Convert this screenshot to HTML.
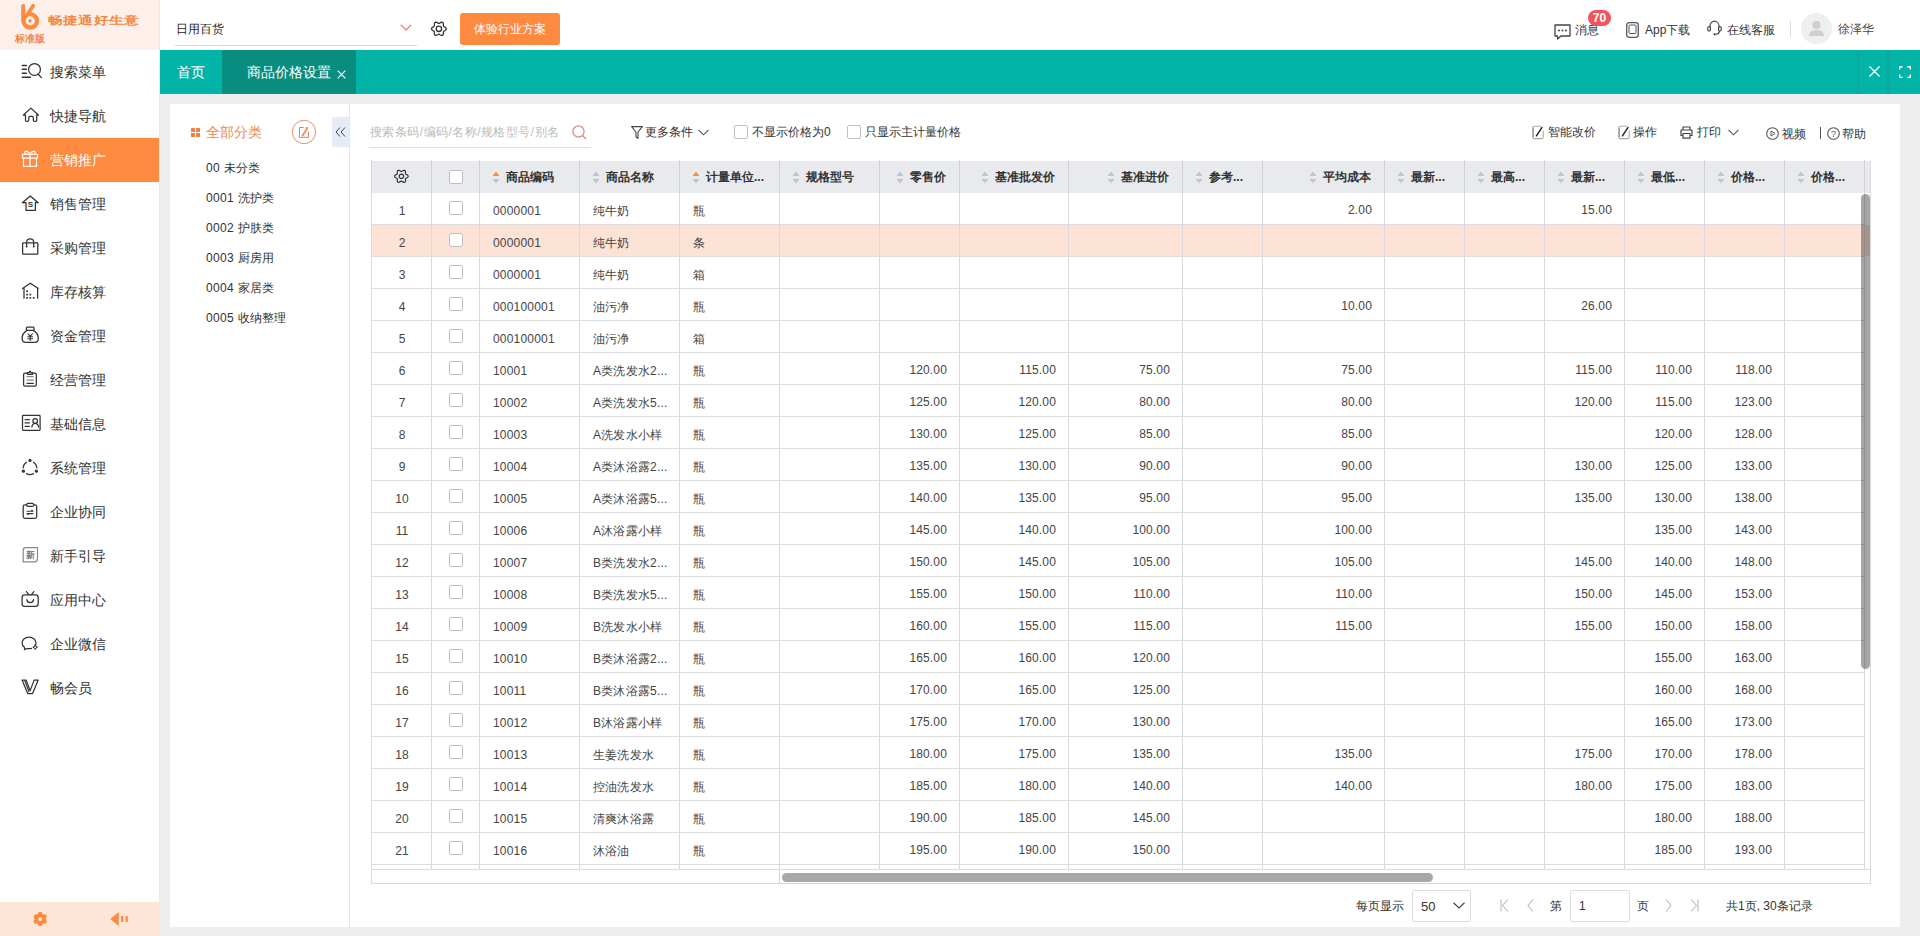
<!DOCTYPE html><html><head><meta charset="utf-8"><style>
*{box-sizing:border-box;margin:0;padding:0}
body{width:1920px;height:936px;overflow:hidden;position:relative;background:#eeeeee;font-family:"Liberation Sans",sans-serif;color:#333;font-size:12px}
.abs{position:absolute}
#sb{position:absolute;left:0;top:0;width:160px;height:936px;background:#fff;border-right:1px solid #e6e9ee}
#logo{position:absolute;left:0;top:0;width:159px;height:50px;background:#fdf0ea}
.mi{position:absolute;left:0;width:159px;height:44px;font-size:14px;color:#333;white-space:nowrap}
.mi .ic{position:absolute;left:18px;top:8px;width:28px;height:28px}
.mi .tx{position:absolute;left:50px;top:0;line-height:44px}
.mi.on{background:#fd8a3f;color:#fff}
#sbb{position:absolute;left:0;top:902px;width:159px;height:34px;background:#fde6d8}
#hd{position:absolute;left:160px;top:0;width:1760px;height:50px;background:#fff}
#tabs{position:absolute;left:160px;top:50px;width:1760px;height:44px;background:#02b4a8;color:#fff;font-size:14px}
#panel{position:absolute;left:170px;top:104px;width:1730px;height:823px;background:#fff}
.t{position:absolute;white-space:nowrap}
</style></head><body>

<div id="sb">
<div id="logo">
<svg class="abs" style="left:14px;top:0px" width="32" height="34" viewBox="14 0 32 34">
<path d="M23.2 5.9V21" fill="none" stroke="#fd8a3f" stroke-width="4" stroke-linecap="round"/>
<path d="M33 5.9L28.2 13.5" fill="none" stroke="#fd8a3f" stroke-width="3.8" stroke-linecap="round"/>
<circle cx="30.3" cy="20.9" r="6.7" fill="none" stroke="#fd8a3f" stroke-width="4.3"/>
<path d="M30 18.7L32.2 20.9L30 23.1L27.8 20.9Z" fill="#fd8a3f"/>
</svg>
<div class="t" style="left:48px;top:10px;font-size:15px;line-height:20px;color:#f5883f;font-weight:bold;transform:scaleY(0.75);transform-origin:0 50%;letter-spacing:0.2px">畅捷通好生意</div>
<div class="t" style="left:15px;top:32px;font-size:10px;line-height:13px;color:#f08545;font-weight:bold">标准版</div>
</div>
<div class="mi" style="top:50px"><span class="ic"><svg width="28" height="28" viewBox="0 0 28 28"><g stroke="#333" fill="none" stroke-width="1.25" stroke-linecap="round" stroke-linejoin="round"><path d="M4.3 7.5H8.4M4.3 11.3H8.4M4.3 15.3H8.4M4.3 19.3H12.5" stroke-width="1.4"/><circle cx="16.5" cy="11.4" r="5.9"/><path d="M20.2 16.2L23.4 19.6"/></g></svg></span><span class="tx">搜索菜单</span></div>
<div class="mi" style="top:94px"><span class="ic"><svg width="28" height="28" viewBox="0 0 28 28"><g stroke="#333" fill="none" stroke-width="1.25" stroke-linecap="round" stroke-linejoin="round"><path d="M5.4 13L12.9 6.1L20.4 13H18.7V18.2Q18.7 19.4 17.5 19.4H16.5Q15.3 19.4 15.3 18.2V15.6Q15.3 14.4 14.1 14.4H12Q10.8 14.4 10.8 15.6V18.2Q10.8 19.4 9.6 19.4H8.7Q7.5 19.4 7.5 18.2V13Z"/></g></svg></span><span class="tx">快捷导航</span></div>
<div class="mi on" style="top:138px"><span class="ic"><svg width="28" height="28" viewBox="0 0 28 28"><g stroke="#fff" fill="none" stroke-width="1.25" stroke-linecap="round" stroke-linejoin="round"><rect x="4.5" y="8.4" width="15" height="3.6"/><path d="M5.5 12V20.4H18.5V12M12 8.4V20.4"/><path d="M12 8.2C10.5 6 8.5 4.8 7.3 5.6C6.3 6.3 6.8 7.6 7.8 8.2M12 8.2C13.5 6 15.5 4.8 16.7 5.6C17.7 6.3 17.2 7.6 16.2 8.2"/></g></svg></span><span class="tx">营销推广</span></div>
<div class="mi" style="top:182px"><span class="ic"><svg width="28" height="28" viewBox="0 0 28 28"><g stroke="#333" fill="none" stroke-width="1.25" stroke-linecap="round" stroke-linejoin="round"><path d="M4.3 12.7L12.3 6L20.2 12.7H17.4V20.4H8V12.7Z"/></g><text x="12.3" y="16.6" font-size="8" font-weight="bold" text-anchor="middle" fill="#333" font-family="Liberation Sans">S</text></svg></span><span class="tx">销售管理</span></div>
<div class="mi" style="top:226px"><span class="ic"><svg width="28" height="28" viewBox="0 0 28 28"><g stroke="#333" fill="none" stroke-width="1.25" stroke-linecap="round" stroke-linejoin="round"><rect x="4.6" y="8.8" width="15.2" height="11.4" rx="0.6"/><path d="M8.6 12.5V8.5C8.6 6.3 10 4.8 12.15 4.8C14.3 4.8 15.7 6.3 15.7 8.5V12.5"/></g><g fill="#333"><circle cx="8.6" cy="12.6" r="0.9"/><circle cx="15.7" cy="12.6" r="0.9"/></g></svg></span><span class="tx">采购管理</span></div>
<div class="mi" style="top:270px"><span class="ic"><svg width="28" height="28" viewBox="0 0 28 28"><g stroke="#333" fill="none" stroke-width="1.25" stroke-linecap="round" stroke-linejoin="round"><path d="M4.5 10.5L12.35 5.2L20.2 10.5M6 9.8V20.2M19.6 9.8V20.2"/></g><g fill="#333"><rect x="8.2" y="12.3" width="1.7" height="1.7"/><rect x="8.2" y="15.7" width="1.7" height="1.7"/><rect x="11.5" y="15.7" width="1.7" height="1.7"/><rect x="8.2" y="19" width="1.7" height="1.7"/><rect x="11.5" y="19" width="1.7" height="1.7"/><rect x="14.8" y="19" width="1.7" height="1.7"/></g></svg></span><span class="tx">库存核算</span></div>
<div class="mi" style="top:314px"><span class="ic"><svg width="28" height="28" viewBox="0 0 28 28"><g stroke="#333" fill="none" stroke-width="1.25" stroke-linecap="round" stroke-linejoin="round"><path d="M9.2 8.4H15.2Q16.2 8.4 16.1 7.4L15.9 5.8Q15.8 5 15 5H9.4Q8.6 5 8.5 5.8L8.3 7.4Q8.2 8.4 9.2 8.4Z"/><path d="M9.2 8.4C5.5 10.5 4 13.5 4.1 16.5C4.2 19.2 5.5 20.4 8 20.4H16.5C19 20.4 20.2 19.2 20.3 16.5C20.4 13.5 18.9 10.5 15.2 8.4"/><path d="M10 11.8L12.2 14.2L14.4 11.8M12.2 14.2V18.5M9.8 14.8H14.6M9.8 16.8H14.6" stroke-width="1.1"/></g></svg></span><span class="tx">资金管理</span></div>
<div class="mi" style="top:358px"><span class="ic"><svg width="28" height="28" viewBox="0 0 28 28"><g stroke="#333" fill="none" stroke-width="1.25" stroke-linecap="round" stroke-linejoin="round"><path d="M9.5 7.1H7Q5.6 7.1 5.6 8.5V18.8Q5.6 20.2 7 20.2H16.9Q18.3 20.2 18.3 18.8V8.5Q18.3 7.1 16.9 7.1H14.5"/><path d="M9.5 8.3V6.6H11.2Q11.4 5.2 12 5.2Q12.6 5.2 12.8 6.6H14.5V8.3Z"/><path d="M9 10.6H15.3M9 14H15.3" stroke="#888"/><path d="M9 17.4H15.3"/></g></svg></span><span class="tx">经营管理</span></div>
<div class="mi" style="top:402px"><span class="ic"><svg width="28" height="28" viewBox="0 0 28 28"><g stroke="#333" fill="none" stroke-width="1.25" stroke-linecap="round" stroke-linejoin="round"><rect x="4.5" y="5.4" width="17.6" height="15" rx="0.8"/><path d="M7.1 9.5H11.4M7.1 12.9H11.4M7.1 16.3H11.4"/><circle cx="17.2" cy="11" r="2.3"/><path d="M13.8 17C14.3 14.6 15.5 13.4 17.2 13.4C18.9 13.4 20.1 14.6 20.6 17"/></g></svg></span><span class="tx">基础信息</span></div>
<div class="mi" style="top:446px"><span class="ic"><svg width="28" height="28" viewBox="0 0 28 28"><g stroke="#333" fill="none" stroke-width="1.25" stroke-linecap="round" stroke-linejoin="round"><path d="M8.6 8.2A6.9 6.9 0 0 0 5.2 13.8M15.4 8.2A6.9 6.9 0 0 1 18.8 13.8M8.5 19.6A6.9 6.9 0 0 0 15.5 19.6"/></g><g fill="#333"><circle cx="12" cy="6.4" r="1.6"/><circle cx="5.4" cy="17.2" r="1.6"/><circle cx="18.4" cy="17.2" r="1.6"/></g></svg></span><span class="tx">系统管理</span></div>
<div class="mi" style="top:490px"><span class="ic"><svg width="28" height="28" viewBox="0 0 28 28"><g stroke="#333" fill="none" stroke-width="1.25" stroke-linecap="round" stroke-linejoin="round"><path d="M8.6 6.8H7Q5.2 6.8 5.2 8.6V18.6Q5.2 20.4 7 20.4H16.9Q18.7 20.4 18.7 18.6V8.6Q18.7 6.8 16.9 6.8H15.7"/><rect x="8.6" y="5.4" width="7.1" height="3.0" rx="1.5"/><path d="M9 13.3H15L13.8 12.2M15 15.6H9L10.2 16.7" stroke-width="1.1"/></g></svg></span><span class="tx">企业协同</span></div>
<div class="mi" style="top:534px"><span class="ic"><svg width="28" height="28" viewBox="0 0 28 28"><g stroke="#888" fill="none" stroke-width="1.2" stroke-linejoin="round"><path d="M7.7 5.6H19.5V16.8Q19.5 19.8 16.5 19.8H5.2V8.1Q5.2 5.6 7.7 5.6Z"/></g><text x="12.3" y="15.8" font-size="8.5" font-weight="bold" text-anchor="middle" fill="#777">新</text></svg></span><span class="tx">新手引导</span></div>
<div class="mi" style="top:578px"><span class="ic"><svg width="28" height="28" viewBox="0 0 28 28"><g stroke="#333" fill="none" stroke-width="1.25" stroke-linecap="round" stroke-linejoin="round"><rect x="4.1" y="8.8" width="16.1" height="11.6" rx="2.6"/><path d="M8.4 5.6L10.8 8.6M15.9 5.6L13.5 8.6M8.8 13.6Q9.2 16.6 12.15 16.6Q15.1 16.6 15.5 13.6"/></g></svg></span><span class="tx">应用中心</span></div>
<div class="mi" style="top:622px"><span class="ic"><svg width="28" height="28" viewBox="0 0 28 28"><g stroke="#333" fill="none" stroke-width="1.25" stroke-linecap="round" stroke-linejoin="round"><path d="M17.6 15.4C18 14.6 18.1 13.8 18 12.9C17.8 9.6 14.9 7.1 11.1 7.1C7.2 7.1 4.1 9.6 4.1 12.9C4.1 14.7 5 16.2 6.4 17.3L6.6 19.6L9 18.5C9.7 18.7 10.4 18.7 11.1 18.7C12 18.7 12.8 18.6 13.6 18.3"/><path d="M17.2 14.8L17.9 16.5L19.6 17.2L17.9 17.9L17.2 19.6L16.5 17.9L14.8 17.2L16.5 16.5Z" stroke-width="1"/></g></svg></span><span class="tx">企业微信</span></div>
<div class="mi" style="top:666px"><span class="ic"><svg width="28" height="28" viewBox="0 0 28 28"><g stroke="#333" fill="none" stroke-width="1.25" stroke-linecap="round" stroke-linejoin="round" stroke-width="1.2"><path d="M4.1 6.1H8.2L12.15 16.6L16.1 6.1H20.2L14.6 19.6H9.7Z"/><path d="M6.8 6.6L11 17.5"/></g></svg></span><span class="tx">畅会员</span></div>
<div id="sbb">
<svg class="abs" style="left:33px;top:10px" width="15" height="14" viewBox="0 0 15 14"><g fill="#fd8a3f"><circle cx="7.2" cy="7" r="4.9"/><circle cx="7.20" cy="11.60" r="2.5"/><circle cx="3.22" cy="9.30" r="2.5"/><circle cx="3.22" cy="4.70" r="2.5"/><circle cx="7.20" cy="2.40" r="2.5"/><circle cx="11.18" cy="4.70" r="2.5"/><circle cx="11.18" cy="9.30" r="2.5"/></g><circle cx="7.2" cy="7" r="2" fill="#fde6d8"/></svg>
<svg class="abs" style="left:110px;top:10px" width="19" height="14" viewBox="0 0 19 14"><path fill="#fd8a3f" d="M0.3 7L8.7 0V14Z"/><rect x="11" y="4" width="2.2" height="6" fill="#fd8a3f"/><rect x="15.6" y="4" width="2.2" height="6" fill="#fd8a3f"/></svg>
</div>
</div>
<div id="hd">
<div class="t" style="left:16px;top:20px;font-size:12px;line-height:18px;color:#222">日用百货</div>
<svg class="abs" style="left:240px;top:24px" width="12" height="7" viewBox="0 0 12 7"><path d="M0.8 0.8L6 6L11.2 0.8" fill="none" stroke="#e2887a" stroke-width="1.3"/></svg>
<div class="abs" style="left:15px;top:45px;width:242px;height:1px;background:#d9d9d9"></div>
<svg class="abs" style="left:269px;top:19px" width="20" height="20" viewBox="0 0 20 20"><path fill="none" stroke="#333" stroke-width="1.3" stroke-linejoin="round" d="M17.30 9.80 L17.21 10.28 L16.95 10.73 L16.55 11.12 L16.08 11.46 L15.60 11.73 L15.16 11.98 L14.81 12.22 L14.58 12.50 L14.45 12.84 L14.42 13.27 L14.42 13.77 L14.43 14.33 L14.37 14.90 L14.23 15.44 L13.97 15.89 L13.60 16.21 L13.14 16.37 L12.62 16.37 L12.08 16.22 L11.56 15.98 L11.07 15.70 L10.64 15.44 L10.26 15.26 L9.90 15.20 L9.54 15.26 L9.16 15.44 L8.73 15.70 L8.24 15.98 L7.72 16.22 L7.18 16.37 L6.66 16.37 L6.20 16.21 L5.83 15.89 L5.57 15.44 L5.43 14.90 L5.37 14.33 L5.38 13.77 L5.38 13.27 L5.35 12.84 L5.22 12.50 L4.99 12.22 L4.64 11.98 L4.20 11.73 L3.72 11.46 L3.25 11.12 L2.85 10.73 L2.59 10.28 L2.50 9.80 L2.59 9.32 L2.85 8.87 L3.25 8.48 L3.72 8.14 L4.20 7.87 L4.64 7.62 L4.99 7.38 L5.22 7.10 L5.35 6.76 L5.38 6.33 L5.38 5.83 L5.37 5.27 L5.43 4.70 L5.57 4.16 L5.83 3.71 L6.20 3.39 L6.66 3.23 L7.18 3.23 L7.72 3.38 L8.24 3.62 L8.73 3.90 L9.16 4.16 L9.54 4.34 L9.90 4.40 L10.26 4.34 L10.64 4.16 L11.07 3.90 L11.56 3.62 L12.08 3.38 L12.62 3.23 L13.14 3.23 L13.60 3.39 L13.97 3.71 L14.23 4.16 L14.37 4.70 L14.43 5.27 L14.42 5.83 L14.42 6.33 L14.45 6.76 L14.58 7.10 L14.81 7.38 L15.16 7.62 L15.60 7.87 L16.08 8.14 L16.55 8.48 L16.95 8.87 L17.21 9.32Z"/><circle cx="9.9" cy="9.8" r="2.7" fill="none" stroke="#333" stroke-width="1.3"/></svg>
<div class="abs" style="left:300px;top:13px;width:100px;height:32px;background:#fd8a3f;border-radius:3px;color:#fff;font-size:12px;line-height:33px;text-align:center">体验行业方案</div>
<svg class="abs" style="left:1394px;top:24px" width="17" height="16" viewBox="0 0 17 16"><path fill="none" stroke="#444" stroke-width="1.3" stroke-linejoin="round" d="M1 1H16V12H7L3.5 15V12H1Z"/><g fill="#444"><circle cx="5" cy="6.5" r="1"/><circle cx="8.5" cy="6.5" r="1"/><circle cx="12" cy="6.5" r="1"/></g></svg>
<div class="t" style="left:1415px;top:21px;font-size:12px;line-height:18px;color:#333">消息</div>
<div class="abs" style="left:1428px;top:10px;width:23px;height:16px;border-radius:8px;background:#f2545b;color:#fff;font-size:12px;font-weight:bold;line-height:16px;text-align:center">70</div>
<svg class="abs" style="left:1466px;top:22px" width="13" height="16" viewBox="0 0 13 16"><rect x="0.7" y="0.7" width="11.6" height="14.6" rx="2.5" fill="none" stroke="#555" stroke-width="1.3"/><rect x="3" y="3" width="7" height="8.5" rx="1" fill="none" stroke="#555" stroke-width="1"/></svg>
<div class="t" style="left:1485px;top:21px;font-size:12px;line-height:18px;color:#333">App下载</div>
<svg class="abs" style="left:1547px;top:20px" width="15" height="16" viewBox="0 0 15 16"><path fill="none" stroke="#444" stroke-width="1.2" d="M3 7.5V6C3 3.2 5 1.2 7.5 1.2C10 1.2 12 3.2 12 6V7.5"/><rect x="0.8" y="6.5" width="2.6" height="4.5" rx="1.3" fill="none" stroke="#444" stroke-width="1.2"/><rect x="11.6" y="6.5" width="2.6" height="4.5" rx="1.3" fill="none" stroke="#444" stroke-width="1.2"/><path d="M12.5 11C12.5 13 11 14 8.5 14.3" fill="none" stroke="#444" stroke-width="1.2"/><circle cx="7.5" cy="14.3" r="1.1" fill="#444"/></svg>
<div class="t" style="left:1567px;top:21px;font-size:12px;line-height:18px;color:#333">在线客服</div>
<div class="abs" style="left:1630px;top:21px;width:1px;height:16px;background:#ddd"></div>
<div class="abs" style="left:1641px;top:13px;width:31px;height:31px;border-radius:50%;background:#efefef;overflow:hidden"><svg width="31" height="31" viewBox="0 0 31 31"><circle cx="15.5" cy="12" r="4" fill="#cfcfcf"/><path d="M8 23C8 19 11 17 15.5 17C20 17 23 19 23 23Z" fill="#cfcfcf"/></svg></div>
<div class="t" style="left:1678px;top:20px;font-size:12px;line-height:18px;color:#444">徐泽华</div>
</div>
<div id="tabs">
<div class="t" style="left:17px;top:0;line-height:44px">首页</div>
<div class="abs" style="left:62px;top:0;width:134px;height:44px;background:#088d80"></div>
<div class="t" style="left:87px;top:0;line-height:44px">商品价格设置</div>
<svg class="abs" style="left:177px;top:20px" width="9" height="9" viewBox="0 0 9 9"><path d="M0.7 0.7L8.3 8.3M8.3 0.7L0.7 8.3" stroke="#fff" stroke-width="1.2"/></svg>
<div class="abs" style="left:1697px;top:0;width:2px;height:44px;background:#0aa99c"></div>
<div class="abs" style="left:1727px;top:0;width:2px;height:44px;background:#0aa99c"></div>
<svg class="abs" style="left:1709px;top:16px" width="11" height="11" viewBox="0 0 11 11"><path d="M0.5 0.5L10.5 10.5M10.5 0.5L0.5 10.5" stroke="#fff" stroke-width="1.3"/></svg>
<svg class="abs" style="left:1739px;top:16px" width="12" height="12" viewBox="0 0 12 12"><path d="M0.7 3.6V0.7H3.6M8.4 0.7H11.3V3.6M11.3 8.4V11.3H8.4M3.6 11.3H0.7V8.4" fill="none" stroke="#fff" stroke-width="1.35"/></svg>
</div>
<div id="panel"></div>
<div class="abs" style="left:349px;top:104px;width:1px;height:823px;background:#e5e5e5"></div>
<svg class="abs" style="left:191px;top:128px" width="9" height="9" viewBox="0 0 9 9"><g fill="#ec8348"><rect x="0" y="0" width="4" height="4"/><rect x="5" y="0" width="4" height="4"/><rect x="0" y="5" width="4" height="4"/><rect x="5" y="5" width="4" height="4"/></g></svg>
<div class="t" style="left:206px;top:123px;font-size:14px;line-height:18px;color:#f0884e">全部分类</div>
<svg class="abs" style="left:291px;top:119px" width="26" height="26" viewBox="0 0 26 26"><circle cx="13" cy="13" r="11.7" fill="none" stroke="#e69070" stroke-width="1"/><path d="M12.6 8.5H8.5V18.3H17.5V12.5" fill="none" stroke="#d9825f" stroke-width="1"/><path d="M14.8 8.5H16.5" stroke="#d9825f" stroke-width="1"/><path d="M16.2 9.6L11.6 16.6" stroke="#f08c50" stroke-width="1.8" stroke-linecap="round"/></svg>
<div class="abs" style="left:332px;top:117px;width:17px;height:30px;background:#e6ecf6"></div>
<svg class="abs" style="left:335px;top:127px" width="11" height="10" viewBox="0 0 11 10"><path d="M5 0.5L1 5L5 9.5M10 0.5L6 5L10 9.5" fill="none" stroke="#444" stroke-width="1"/></svg>
<div class="t" style="left:206px;top:159px;font-size:12px;line-height:18px;color:#333;letter-spacing:0.3px">00 未分类</div>
<div class="t" style="left:206px;top:189px;font-size:12px;line-height:18px;color:#333;letter-spacing:0.3px">0001 洗护类</div>
<div class="t" style="left:206px;top:219px;font-size:12px;line-height:18px;color:#333;letter-spacing:0.3px">0002 护肤类</div>
<div class="t" style="left:206px;top:249px;font-size:12px;line-height:18px;color:#333;letter-spacing:0.3px">0003 厨房用</div>
<div class="t" style="left:206px;top:279px;font-size:12px;line-height:18px;color:#333;letter-spacing:0.3px">0004 家居类</div>
<div class="t" style="left:206px;top:309px;font-size:12px;line-height:18px;color:#333;letter-spacing:0.3px">0005 收纳整理</div>
<div class="t" style="left:370px;top:123px;font-size:12px;line-height:18px;color:#bbb;letter-spacing:0.45px">搜索条码/编码/名称/规格型号/别名</div>
<svg class="abs" style="left:572px;top:125px" width="15" height="15" viewBox="0 0 15 15"><circle cx="6.5" cy="6.5" r="5.6" fill="none" stroke="#d98a7c" stroke-width="1.2"/><path d="M10.5 10.5L14 14" stroke="#d98a7c" stroke-width="1.2"/></svg>
<div class="abs" style="left:369px;top:147px;width:222px;height:1px;background:#e0e0e0"></div>
<svg class="abs" style="left:631px;top:126px" width="12" height="13" viewBox="0 0 12 13"><path d="M0.6 0.6H11.4L7 6V12.4L5 11V6Z" fill="none" stroke="#444" stroke-width="1.1" stroke-linejoin="round"/></svg>
<div class="t" style="left:645px;top:123px;font-size:12px;line-height:18px;color:#333">更多条件</div>
<svg class="abs" style="left:698px;top:129px" width="11" height="7" viewBox="0 0 11 7"><path d="M0.5 0.8L5.5 5.8L10.5 0.8" fill="none" stroke="#555" stroke-width="1.1"/></svg>
<div class="abs" style="left:734px;top:125px;width:14px;height:14px;border:1px solid #bfbfbf;border-radius:2px;background:#fff"></div>
<div class="t" style="left:752px;top:123px;font-size:12px;line-height:18px;color:#333">不显示价格为0</div>
<div class="abs" style="left:847px;top:125px;width:14px;height:14px;border:1px solid #bfbfbf;border-radius:2px;background:#fff"></div>
<div class="t" style="left:865px;top:123px;font-size:12px;line-height:18px;color:#333">只显示主计量价格</div>
<svg class="abs" style="left:1532px;top:125px" width="13" height="15" viewBox="0 0 13 15"><path d="M9.5 1.3H2.3Q0.9 1.3 0.9 2.7V12.2Q0.9 13.6 2.3 13.6H9.8Q11.2 13.6 11.2 12.2V5.5" fill="none" stroke="#aaa" stroke-width="1.1"/><path d="M1.2 2.5V12.5" stroke="#999" stroke-width="1.3"/><path d="M4.4 10.8L9.9 2.6" stroke="#222" stroke-width="1.5" stroke-linecap="round"/></svg>
<div class="t" style="left:1548px;top:123px;font-size:12px;line-height:18px;color:#333">智能改价</div>
<svg class="abs" style="left:1618px;top:125px" width="13" height="15" viewBox="0 0 13 15"><path d="M9.5 1.3H2.3Q0.9 1.3 0.9 2.7V12.2Q0.9 13.6 2.3 13.6H9.8Q11.2 13.6 11.2 12.2V5.5" fill="none" stroke="#aaa" stroke-width="1.1"/><path d="M1.2 2.5V12.5" stroke="#999" stroke-width="1.3"/><path d="M4.4 10.8L9.9 2.6" stroke="#222" stroke-width="1.5" stroke-linecap="round"/></svg>
<div class="t" style="left:1633px;top:123px;font-size:12px;line-height:18px;color:#333">操作</div>
<svg class="abs" style="left:1680px;top:126px" width="13" height="13" viewBox="0 0 13 13"><path d="M3 4V1H10V4M3 9.5H1V4H12V9.5H10M3 7.5H10V12.2H3Z" fill="none" stroke="#444" stroke-width="1.2" stroke-linejoin="round"/></svg>
<div class="t" style="left:1697px;top:123px;font-size:12px;line-height:18px;color:#333">打印</div>
<svg class="abs" style="left:1728px;top:129px" width="11" height="7" viewBox="0 0 11 7"><path d="M0.5 0.8L5.5 5.8L10.5 0.8" fill="none" stroke="#555" stroke-width="1.1"/></svg>
<svg class="abs" style="left:1766px;top:127px" width="13" height="13" viewBox="0 0 13 13"><circle cx="6.5" cy="6.5" r="5.8" fill="none" stroke="#555" stroke-width="1.1"/><path d="M5 4V9L9 6.5Z" fill="none" stroke="#555" stroke-width="1"/></svg>
<div class="t" style="left:1782px;top:125px;font-size:12px;line-height:18px;color:#333">视频</div>
<div class="abs" style="left:1820px;top:127px;width:1px;height:12px;background:#555"></div>
<svg class="abs" style="left:1827px;top:127px" width="13" height="13" viewBox="0 0 13 13"><circle cx="6.5" cy="6.5" r="5.8" fill="none" stroke="#555" stroke-width="1.1"/><text x="6.5" y="10" font-size="9" text-anchor="middle" fill="#555" font-family="Liberation Sans">?</text></svg>
<div class="t" style="left:1842px;top:125px;font-size:12px;line-height:18px;color:#333">帮助</div>
<div class="abs" style="left:371px;top:161px;width:1500px;height:32px;background:#e8eaed"></div>
<div class="abs" style="left:372px;top:225px;width:1498px;height:31px;background:#fde3d5"></div>
<div class="abs" style="left:371px;top:224px;width:1493px;height:1px;background:#dcdcdc"></div>
<div class="abs" style="left:371px;top:256px;width:1493px;height:1px;background:#dcdcdc"></div>
<div class="abs" style="left:371px;top:288px;width:1493px;height:1px;background:#dcdcdc"></div>
<div class="abs" style="left:371px;top:320px;width:1493px;height:1px;background:#dcdcdc"></div>
<div class="abs" style="left:371px;top:352px;width:1493px;height:1px;background:#dcdcdc"></div>
<div class="abs" style="left:371px;top:384px;width:1493px;height:1px;background:#dcdcdc"></div>
<div class="abs" style="left:371px;top:416px;width:1493px;height:1px;background:#dcdcdc"></div>
<div class="abs" style="left:371px;top:448px;width:1493px;height:1px;background:#dcdcdc"></div>
<div class="abs" style="left:371px;top:480px;width:1493px;height:1px;background:#dcdcdc"></div>
<div class="abs" style="left:371px;top:512px;width:1493px;height:1px;background:#dcdcdc"></div>
<div class="abs" style="left:371px;top:544px;width:1493px;height:1px;background:#dcdcdc"></div>
<div class="abs" style="left:371px;top:576px;width:1493px;height:1px;background:#dcdcdc"></div>
<div class="abs" style="left:371px;top:608px;width:1493px;height:1px;background:#dcdcdc"></div>
<div class="abs" style="left:371px;top:640px;width:1493px;height:1px;background:#dcdcdc"></div>
<div class="abs" style="left:371px;top:672px;width:1493px;height:1px;background:#dcdcdc"></div>
<div class="abs" style="left:371px;top:704px;width:1493px;height:1px;background:#dcdcdc"></div>
<div class="abs" style="left:371px;top:736px;width:1493px;height:1px;background:#dcdcdc"></div>
<div class="abs" style="left:371px;top:768px;width:1493px;height:1px;background:#dcdcdc"></div>
<div class="abs" style="left:371px;top:800px;width:1493px;height:1px;background:#dcdcdc"></div>
<div class="abs" style="left:371px;top:832px;width:1493px;height:1px;background:#dcdcdc"></div>
<div class="abs" style="left:371px;top:864px;width:1493px;height:1px;background:#dcdcdc"></div>
<div class="abs" style="left:371px;top:869px;width:1500px;height:1px;background:#dcdcdc"></div>
<div class="abs" style="left:371px;top:883px;width:1500px;height:1px;background:#d8d8d8"></div>
<div class="abs" style="left:371px;top:193px;width:1px;height:691px;background:#dadada"></div>
<div class="abs" style="left:371px;top:160px;width:1px;height:33px;background:#d2d3d7"></div>
<div class="abs" style="left:431px;top:193px;width:1px;height:676px;background:#dadada"></div>
<div class="abs" style="left:431px;top:160px;width:1px;height:33px;background:#d2d3d7"></div>
<div class="abs" style="left:479px;top:193px;width:1px;height:676px;background:#dadada"></div>
<div class="abs" style="left:479px;top:160px;width:1px;height:33px;background:#d2d3d7"></div>
<div class="abs" style="left:579px;top:193px;width:1px;height:676px;background:#dadada"></div>
<div class="abs" style="left:579px;top:160px;width:1px;height:33px;background:#d2d3d7"></div>
<div class="abs" style="left:679px;top:193px;width:1px;height:676px;background:#dadada"></div>
<div class="abs" style="left:679px;top:160px;width:1px;height:33px;background:#d2d3d7"></div>
<div class="abs" style="left:779px;top:193px;width:1px;height:691px;background:#dadada"></div>
<div class="abs" style="left:779px;top:160px;width:1px;height:33px;background:#d2d3d7"></div>
<div class="abs" style="left:879px;top:193px;width:1px;height:676px;background:#dadada"></div>
<div class="abs" style="left:879px;top:160px;width:1px;height:33px;background:#d2d3d7"></div>
<div class="abs" style="left:959px;top:193px;width:1px;height:676px;background:#dadada"></div>
<div class="abs" style="left:959px;top:160px;width:1px;height:33px;background:#d2d3d7"></div>
<div class="abs" style="left:1068px;top:193px;width:1px;height:676px;background:#dadada"></div>
<div class="abs" style="left:1068px;top:160px;width:1px;height:33px;background:#d2d3d7"></div>
<div class="abs" style="left:1182px;top:193px;width:1px;height:676px;background:#dadada"></div>
<div class="abs" style="left:1182px;top:160px;width:1px;height:33px;background:#d2d3d7"></div>
<div class="abs" style="left:1262px;top:193px;width:1px;height:676px;background:#dadada"></div>
<div class="abs" style="left:1262px;top:160px;width:1px;height:33px;background:#d2d3d7"></div>
<div class="abs" style="left:1384px;top:193px;width:1px;height:676px;background:#dadada"></div>
<div class="abs" style="left:1384px;top:160px;width:1px;height:33px;background:#d2d3d7"></div>
<div class="abs" style="left:1464px;top:193px;width:1px;height:676px;background:#dadada"></div>
<div class="abs" style="left:1464px;top:160px;width:1px;height:33px;background:#d2d3d7"></div>
<div class="abs" style="left:1544px;top:193px;width:1px;height:676px;background:#dadada"></div>
<div class="abs" style="left:1544px;top:160px;width:1px;height:33px;background:#d2d3d7"></div>
<div class="abs" style="left:1624px;top:193px;width:1px;height:676px;background:#dadada"></div>
<div class="abs" style="left:1624px;top:160px;width:1px;height:33px;background:#d2d3d7"></div>
<div class="abs" style="left:1704px;top:193px;width:1px;height:676px;background:#dadada"></div>
<div class="abs" style="left:1704px;top:160px;width:1px;height:33px;background:#d2d3d7"></div>
<div class="abs" style="left:1784px;top:193px;width:1px;height:676px;background:#dadada"></div>
<div class="abs" style="left:1784px;top:160px;width:1px;height:33px;background:#d2d3d7"></div>
<div class="abs" style="left:1864px;top:193px;width:1px;height:676px;background:#dadada"></div>
<div class="abs" style="left:1864px;top:160px;width:1px;height:33px;background:#d2d3d7"></div>
<div class="abs" style="left:1870px;top:161px;width:1px;height:723px;background:#dadada"></div>
<div class="abs" style="left:1861px;top:194px;width:9px;height:475px;border-radius:4.5px;background:rgba(0,0,0,0.35)"></div>
<div class="abs" style="left:782px;top:873px;width:651px;height:9px;border-radius:4.5px;background:#a8a8a8"></div>
<svg class="abs" style="left:390px;top:166px" width="22" height="22" viewBox="0 0 22 22"><path fill="none" stroke="#333" stroke-width="1.2" stroke-linejoin="round" d="M18.20 10.30 L18.11 10.74 L17.85 11.15 L17.46 11.51 L17.00 11.80 L16.53 12.04 L16.11 12.25 L15.77 12.46 L15.56 12.70 L15.45 13.01 L15.44 13.40 L15.47 13.87 L15.50 14.40 L15.48 14.95 L15.36 15.46 L15.14 15.89 L14.80 16.19 L14.37 16.33 L13.89 16.31 L13.39 16.15 L12.90 15.90 L12.46 15.61 L12.06 15.35 L11.72 15.17 L11.40 15.10 L11.08 15.17 L10.74 15.35 L10.34 15.61 L9.90 15.90 L9.41 16.15 L8.91 16.31 L8.43 16.33 L8.00 16.19 L7.66 15.89 L7.44 15.46 L7.32 14.95 L7.30 14.40 L7.33 13.87 L7.36 13.40 L7.35 13.01 L7.24 12.70 L7.03 12.46 L6.69 12.25 L6.27 12.04 L5.80 11.80 L5.34 11.51 L4.95 11.15 L4.69 10.74 L4.60 10.30 L4.69 9.86 L4.95 9.45 L5.34 9.09 L5.80 8.80 L6.27 8.56 L6.69 8.35 L7.03 8.14 L7.24 7.90 L7.35 7.59 L7.36 7.20 L7.33 6.73 L7.30 6.20 L7.32 5.65 L7.44 5.14 L7.66 4.71 L8.00 4.41 L8.43 4.27 L8.91 4.29 L9.41 4.45 L9.90 4.70 L10.34 4.99 L10.74 5.25 L11.08 5.43 L11.40 5.50 L11.72 5.43 L12.06 5.25 L12.46 4.99 L12.90 4.70 L13.39 4.45 L13.89 4.29 L14.37 4.27 L14.80 4.41 L15.14 4.71 L15.36 5.14 L15.48 5.65 L15.50 6.20 L15.47 6.73 L15.44 7.20 L15.45 7.59 L15.56 7.90 L15.77 8.14 L16.11 8.35 L16.53 8.56 L17.00 8.80 L17.46 9.09 L17.85 9.45 L18.11 9.86Z"/><circle cx="11.4" cy="10.3" r="2.2" fill="none" stroke="#333" stroke-width="1.2"/></svg>
<div class="abs" style="left:449px;top:170px;width:14px;height:14px;border:1px solid #bfbfbf;border-radius:2px;background:#fff"></div>
<svg class="abs" style="left:492px;top:171px" width="8" height="13" viewBox="0 0 8 13"><path d="M4 0.5L7.5 5H0.5Z" fill="#fd8a3f"/><path d="M4 12.5L7.5 8H0.5Z" fill="#c0c4cc"/></svg>
<div class="t" style="left:506px;top:168px;font-size:12px;line-height:18px;font-weight:bold;color:#333">商品编码</div>
<svg class="abs" style="left:592px;top:171px" width="8" height="13" viewBox="0 0 8 13"><path d="M4 0.5L7.5 5H0.5Z" fill="#c0c4cc"/><path d="M4 12.5L7.5 8H0.5Z" fill="#c0c4cc"/></svg>
<div class="t" style="left:606px;top:168px;font-size:12px;line-height:18px;font-weight:bold;color:#333">商品名称</div>
<svg class="abs" style="left:692px;top:171px" width="8" height="13" viewBox="0 0 8 13"><path d="M4 0.5L7.5 5H0.5Z" fill="#fd8a3f"/><path d="M4 12.5L7.5 8H0.5Z" fill="#c0c4cc"/></svg>
<div class="t" style="left:706px;top:168px;font-size:12px;line-height:18px;font-weight:bold;color:#333">计量单位...</div>
<svg class="abs" style="left:792px;top:171px" width="8" height="13" viewBox="0 0 8 13"><path d="M4 0.5L7.5 5H0.5Z" fill="#c0c4cc"/><path d="M4 12.5L7.5 8H0.5Z" fill="#c0c4cc"/></svg>
<div class="t" style="left:806px;top:168px;font-size:12px;line-height:18px;font-weight:bold;color:#333">规格型号</div>
<div class="t" style="left:879px;width:67px;top:168px;font-size:12px;line-height:18px;font-weight:bold;color:#333;text-align:right">零售价</div>
<svg class="abs" style="left:896px;top:171px" width="8" height="13" viewBox="0 0 8 13"><path d="M4 0.5L7.5 5H0.5Z" fill="#c0c4cc"/><path d="M4 12.5L7.5 8H0.5Z" fill="#c0c4cc"/></svg>
<div class="t" style="left:959px;width:96px;top:168px;font-size:12px;line-height:18px;font-weight:bold;color:#333;text-align:right">基准批发价</div>
<svg class="abs" style="left:981px;top:171px" width="8" height="13" viewBox="0 0 8 13"><path d="M4 0.5L7.5 5H0.5Z" fill="#c0c4cc"/><path d="M4 12.5L7.5 8H0.5Z" fill="#c0c4cc"/></svg>
<div class="t" style="left:1068px;width:101px;top:168px;font-size:12px;line-height:18px;font-weight:bold;color:#333;text-align:right">基准进价</div>
<svg class="abs" style="left:1107px;top:171px" width="8" height="13" viewBox="0 0 8 13"><path d="M4 0.5L7.5 5H0.5Z" fill="#c0c4cc"/><path d="M4 12.5L7.5 8H0.5Z" fill="#c0c4cc"/></svg>
<svg class="abs" style="left:1195px;top:171px" width="8" height="13" viewBox="0 0 8 13"><path d="M4 0.5L7.5 5H0.5Z" fill="#c0c4cc"/><path d="M4 12.5L7.5 8H0.5Z" fill="#c0c4cc"/></svg>
<div class="t" style="left:1209px;top:168px;font-size:12px;line-height:18px;font-weight:bold;color:#333">参考...</div>
<div class="t" style="left:1262px;width:109px;top:168px;font-size:12px;line-height:18px;font-weight:bold;color:#333;text-align:right">平均成本</div>
<svg class="abs" style="left:1309px;top:171px" width="8" height="13" viewBox="0 0 8 13"><path d="M4 0.5L7.5 5H0.5Z" fill="#c0c4cc"/><path d="M4 12.5L7.5 8H0.5Z" fill="#c0c4cc"/></svg>
<svg class="abs" style="left:1397px;top:171px" width="8" height="13" viewBox="0 0 8 13"><path d="M4 0.5L7.5 5H0.5Z" fill="#c0c4cc"/><path d="M4 12.5L7.5 8H0.5Z" fill="#c0c4cc"/></svg>
<div class="t" style="left:1411px;top:168px;font-size:12px;line-height:18px;font-weight:bold;color:#333">最新...</div>
<svg class="abs" style="left:1477px;top:171px" width="8" height="13" viewBox="0 0 8 13"><path d="M4 0.5L7.5 5H0.5Z" fill="#c0c4cc"/><path d="M4 12.5L7.5 8H0.5Z" fill="#c0c4cc"/></svg>
<div class="t" style="left:1491px;top:168px;font-size:12px;line-height:18px;font-weight:bold;color:#333">最高...</div>
<svg class="abs" style="left:1557px;top:171px" width="8" height="13" viewBox="0 0 8 13"><path d="M4 0.5L7.5 5H0.5Z" fill="#c0c4cc"/><path d="M4 12.5L7.5 8H0.5Z" fill="#c0c4cc"/></svg>
<div class="t" style="left:1571px;top:168px;font-size:12px;line-height:18px;font-weight:bold;color:#333">最新...</div>
<svg class="abs" style="left:1637px;top:171px" width="8" height="13" viewBox="0 0 8 13"><path d="M4 0.5L7.5 5H0.5Z" fill="#c0c4cc"/><path d="M4 12.5L7.5 8H0.5Z" fill="#c0c4cc"/></svg>
<div class="t" style="left:1651px;top:168px;font-size:12px;line-height:18px;font-weight:bold;color:#333">最低...</div>
<svg class="abs" style="left:1717px;top:171px" width="8" height="13" viewBox="0 0 8 13"><path d="M4 0.5L7.5 5H0.5Z" fill="#c0c4cc"/><path d="M4 12.5L7.5 8H0.5Z" fill="#c0c4cc"/></svg>
<div class="t" style="left:1731px;top:168px;font-size:12px;line-height:18px;font-weight:bold;color:#333">价格...</div>
<svg class="abs" style="left:1797px;top:171px" width="8" height="13" viewBox="0 0 8 13"><path d="M4 0.5L7.5 5H0.5Z" fill="#c0c4cc"/><path d="M4 12.5L7.5 8H0.5Z" fill="#c0c4cc"/></svg>
<div class="t" style="left:1811px;top:168px;font-size:12px;line-height:18px;font-weight:bold;color:#333">价格...</div>
<div class="t" style="left:372px;width:60px;top:202px;font-size:12px;line-height:18px;color:#444;text-align:center">1</div>
<div class="abs" style="left:449px;top:201px;width:14px;height:14px;border:1px solid #bfbfbf;border-radius:2px;background:#fff"></div>
<div class="t" style="left:493px;top:202px;font-size:12px;line-height:18px;color:#444;letter-spacing:0.2px">0000001</div>
<div class="t" style="left:593px;top:202px;font-size:12px;line-height:18px;color:#444;letter-spacing:0.2px">纯牛奶</div>
<div class="t" style="left:693px;top:202px;font-size:12px;line-height:18px;color:#444;letter-spacing:0.2px">瓶</div>
<div class="t" style="left:1262px;width:110px;top:201px;font-size:12px;line-height:18px;color:#444;text-align:right;letter-spacing:0.15px">2.00</div>
<div class="t" style="left:1544px;width:68px;top:201px;font-size:12px;line-height:18px;color:#444;text-align:right;letter-spacing:0.15px">15.00</div>
<div class="t" style="left:372px;width:60px;top:234px;font-size:12px;line-height:18px;color:#444;text-align:center">2</div>
<div class="abs" style="left:449px;top:233px;width:14px;height:14px;border:1px solid #bfbfbf;border-radius:2px;background:#fff"></div>
<div class="t" style="left:493px;top:234px;font-size:12px;line-height:18px;color:#444;letter-spacing:0.2px">0000001</div>
<div class="t" style="left:593px;top:234px;font-size:12px;line-height:18px;color:#444;letter-spacing:0.2px">纯牛奶</div>
<div class="t" style="left:693px;top:234px;font-size:12px;line-height:18px;color:#444;letter-spacing:0.2px">条</div>
<div class="t" style="left:372px;width:60px;top:266px;font-size:12px;line-height:18px;color:#444;text-align:center">3</div>
<div class="abs" style="left:449px;top:265px;width:14px;height:14px;border:1px solid #bfbfbf;border-radius:2px;background:#fff"></div>
<div class="t" style="left:493px;top:266px;font-size:12px;line-height:18px;color:#444;letter-spacing:0.2px">0000001</div>
<div class="t" style="left:593px;top:266px;font-size:12px;line-height:18px;color:#444;letter-spacing:0.2px">纯牛奶</div>
<div class="t" style="left:693px;top:266px;font-size:12px;line-height:18px;color:#444;letter-spacing:0.2px">箱</div>
<div class="t" style="left:372px;width:60px;top:298px;font-size:12px;line-height:18px;color:#444;text-align:center">4</div>
<div class="abs" style="left:449px;top:297px;width:14px;height:14px;border:1px solid #bfbfbf;border-radius:2px;background:#fff"></div>
<div class="t" style="left:493px;top:298px;font-size:12px;line-height:18px;color:#444;letter-spacing:0.2px">000100001</div>
<div class="t" style="left:593px;top:298px;font-size:12px;line-height:18px;color:#444;letter-spacing:0.2px">油污净</div>
<div class="t" style="left:693px;top:298px;font-size:12px;line-height:18px;color:#444;letter-spacing:0.2px">瓶</div>
<div class="t" style="left:1262px;width:110px;top:297px;font-size:12px;line-height:18px;color:#444;text-align:right;letter-spacing:0.15px">10.00</div>
<div class="t" style="left:1544px;width:68px;top:297px;font-size:12px;line-height:18px;color:#444;text-align:right;letter-spacing:0.15px">26.00</div>
<div class="t" style="left:372px;width:60px;top:330px;font-size:12px;line-height:18px;color:#444;text-align:center">5</div>
<div class="abs" style="left:449px;top:329px;width:14px;height:14px;border:1px solid #bfbfbf;border-radius:2px;background:#fff"></div>
<div class="t" style="left:493px;top:330px;font-size:12px;line-height:18px;color:#444;letter-spacing:0.2px">000100001</div>
<div class="t" style="left:593px;top:330px;font-size:12px;line-height:18px;color:#444;letter-spacing:0.2px">油污净</div>
<div class="t" style="left:693px;top:330px;font-size:12px;line-height:18px;color:#444;letter-spacing:0.2px">箱</div>
<div class="t" style="left:372px;width:60px;top:362px;font-size:12px;line-height:18px;color:#444;text-align:center">6</div>
<div class="abs" style="left:449px;top:361px;width:14px;height:14px;border:1px solid #bfbfbf;border-radius:2px;background:#fff"></div>
<div class="t" style="left:493px;top:362px;font-size:12px;line-height:18px;color:#444;letter-spacing:0.2px">10001</div>
<div class="t" style="left:593px;top:362px;font-size:12px;line-height:18px;color:#444;letter-spacing:0.2px">A类洗发水2...</div>
<div class="t" style="left:693px;top:362px;font-size:12px;line-height:18px;color:#444;letter-spacing:0.2px">瓶</div>
<div class="t" style="left:879px;width:68px;top:361px;font-size:12px;line-height:18px;color:#444;text-align:right;letter-spacing:0.15px">120.00</div>
<div class="t" style="left:959px;width:97px;top:361px;font-size:12px;line-height:18px;color:#444;text-align:right;letter-spacing:0.15px">115.00</div>
<div class="t" style="left:1068px;width:102px;top:361px;font-size:12px;line-height:18px;color:#444;text-align:right;letter-spacing:0.15px">75.00</div>
<div class="t" style="left:1262px;width:110px;top:361px;font-size:12px;line-height:18px;color:#444;text-align:right;letter-spacing:0.15px">75.00</div>
<div class="t" style="left:1544px;width:68px;top:361px;font-size:12px;line-height:18px;color:#444;text-align:right;letter-spacing:0.15px">115.00</div>
<div class="t" style="left:1624px;width:68px;top:361px;font-size:12px;line-height:18px;color:#444;text-align:right;letter-spacing:0.15px">110.00</div>
<div class="t" style="left:1704px;width:68px;top:361px;font-size:12px;line-height:18px;color:#444;text-align:right;letter-spacing:0.15px">118.00</div>
<div class="t" style="left:372px;width:60px;top:394px;font-size:12px;line-height:18px;color:#444;text-align:center">7</div>
<div class="abs" style="left:449px;top:393px;width:14px;height:14px;border:1px solid #bfbfbf;border-radius:2px;background:#fff"></div>
<div class="t" style="left:493px;top:394px;font-size:12px;line-height:18px;color:#444;letter-spacing:0.2px">10002</div>
<div class="t" style="left:593px;top:394px;font-size:12px;line-height:18px;color:#444;letter-spacing:0.2px">A类洗发水5...</div>
<div class="t" style="left:693px;top:394px;font-size:12px;line-height:18px;color:#444;letter-spacing:0.2px">瓶</div>
<div class="t" style="left:879px;width:68px;top:393px;font-size:12px;line-height:18px;color:#444;text-align:right;letter-spacing:0.15px">125.00</div>
<div class="t" style="left:959px;width:97px;top:393px;font-size:12px;line-height:18px;color:#444;text-align:right;letter-spacing:0.15px">120.00</div>
<div class="t" style="left:1068px;width:102px;top:393px;font-size:12px;line-height:18px;color:#444;text-align:right;letter-spacing:0.15px">80.00</div>
<div class="t" style="left:1262px;width:110px;top:393px;font-size:12px;line-height:18px;color:#444;text-align:right;letter-spacing:0.15px">80.00</div>
<div class="t" style="left:1544px;width:68px;top:393px;font-size:12px;line-height:18px;color:#444;text-align:right;letter-spacing:0.15px">120.00</div>
<div class="t" style="left:1624px;width:68px;top:393px;font-size:12px;line-height:18px;color:#444;text-align:right;letter-spacing:0.15px">115.00</div>
<div class="t" style="left:1704px;width:68px;top:393px;font-size:12px;line-height:18px;color:#444;text-align:right;letter-spacing:0.15px">123.00</div>
<div class="t" style="left:372px;width:60px;top:426px;font-size:12px;line-height:18px;color:#444;text-align:center">8</div>
<div class="abs" style="left:449px;top:425px;width:14px;height:14px;border:1px solid #bfbfbf;border-radius:2px;background:#fff"></div>
<div class="t" style="left:493px;top:426px;font-size:12px;line-height:18px;color:#444;letter-spacing:0.2px">10003</div>
<div class="t" style="left:593px;top:426px;font-size:12px;line-height:18px;color:#444;letter-spacing:0.2px">A洗发水小样</div>
<div class="t" style="left:693px;top:426px;font-size:12px;line-height:18px;color:#444;letter-spacing:0.2px">瓶</div>
<div class="t" style="left:879px;width:68px;top:425px;font-size:12px;line-height:18px;color:#444;text-align:right;letter-spacing:0.15px">130.00</div>
<div class="t" style="left:959px;width:97px;top:425px;font-size:12px;line-height:18px;color:#444;text-align:right;letter-spacing:0.15px">125.00</div>
<div class="t" style="left:1068px;width:102px;top:425px;font-size:12px;line-height:18px;color:#444;text-align:right;letter-spacing:0.15px">85.00</div>
<div class="t" style="left:1262px;width:110px;top:425px;font-size:12px;line-height:18px;color:#444;text-align:right;letter-spacing:0.15px">85.00</div>
<div class="t" style="left:1624px;width:68px;top:425px;font-size:12px;line-height:18px;color:#444;text-align:right;letter-spacing:0.15px">120.00</div>
<div class="t" style="left:1704px;width:68px;top:425px;font-size:12px;line-height:18px;color:#444;text-align:right;letter-spacing:0.15px">128.00</div>
<div class="t" style="left:372px;width:60px;top:458px;font-size:12px;line-height:18px;color:#444;text-align:center">9</div>
<div class="abs" style="left:449px;top:457px;width:14px;height:14px;border:1px solid #bfbfbf;border-radius:2px;background:#fff"></div>
<div class="t" style="left:493px;top:458px;font-size:12px;line-height:18px;color:#444;letter-spacing:0.2px">10004</div>
<div class="t" style="left:593px;top:458px;font-size:12px;line-height:18px;color:#444;letter-spacing:0.2px">A类沐浴露2...</div>
<div class="t" style="left:693px;top:458px;font-size:12px;line-height:18px;color:#444;letter-spacing:0.2px">瓶</div>
<div class="t" style="left:879px;width:68px;top:457px;font-size:12px;line-height:18px;color:#444;text-align:right;letter-spacing:0.15px">135.00</div>
<div class="t" style="left:959px;width:97px;top:457px;font-size:12px;line-height:18px;color:#444;text-align:right;letter-spacing:0.15px">130.00</div>
<div class="t" style="left:1068px;width:102px;top:457px;font-size:12px;line-height:18px;color:#444;text-align:right;letter-spacing:0.15px">90.00</div>
<div class="t" style="left:1262px;width:110px;top:457px;font-size:12px;line-height:18px;color:#444;text-align:right;letter-spacing:0.15px">90.00</div>
<div class="t" style="left:1544px;width:68px;top:457px;font-size:12px;line-height:18px;color:#444;text-align:right;letter-spacing:0.15px">130.00</div>
<div class="t" style="left:1624px;width:68px;top:457px;font-size:12px;line-height:18px;color:#444;text-align:right;letter-spacing:0.15px">125.00</div>
<div class="t" style="left:1704px;width:68px;top:457px;font-size:12px;line-height:18px;color:#444;text-align:right;letter-spacing:0.15px">133.00</div>
<div class="t" style="left:372px;width:60px;top:490px;font-size:12px;line-height:18px;color:#444;text-align:center">10</div>
<div class="abs" style="left:449px;top:489px;width:14px;height:14px;border:1px solid #bfbfbf;border-radius:2px;background:#fff"></div>
<div class="t" style="left:493px;top:490px;font-size:12px;line-height:18px;color:#444;letter-spacing:0.2px">10005</div>
<div class="t" style="left:593px;top:490px;font-size:12px;line-height:18px;color:#444;letter-spacing:0.2px">A类沐浴露5...</div>
<div class="t" style="left:693px;top:490px;font-size:12px;line-height:18px;color:#444;letter-spacing:0.2px">瓶</div>
<div class="t" style="left:879px;width:68px;top:489px;font-size:12px;line-height:18px;color:#444;text-align:right;letter-spacing:0.15px">140.00</div>
<div class="t" style="left:959px;width:97px;top:489px;font-size:12px;line-height:18px;color:#444;text-align:right;letter-spacing:0.15px">135.00</div>
<div class="t" style="left:1068px;width:102px;top:489px;font-size:12px;line-height:18px;color:#444;text-align:right;letter-spacing:0.15px">95.00</div>
<div class="t" style="left:1262px;width:110px;top:489px;font-size:12px;line-height:18px;color:#444;text-align:right;letter-spacing:0.15px">95.00</div>
<div class="t" style="left:1544px;width:68px;top:489px;font-size:12px;line-height:18px;color:#444;text-align:right;letter-spacing:0.15px">135.00</div>
<div class="t" style="left:1624px;width:68px;top:489px;font-size:12px;line-height:18px;color:#444;text-align:right;letter-spacing:0.15px">130.00</div>
<div class="t" style="left:1704px;width:68px;top:489px;font-size:12px;line-height:18px;color:#444;text-align:right;letter-spacing:0.15px">138.00</div>
<div class="t" style="left:372px;width:60px;top:522px;font-size:12px;line-height:18px;color:#444;text-align:center">11</div>
<div class="abs" style="left:449px;top:521px;width:14px;height:14px;border:1px solid #bfbfbf;border-radius:2px;background:#fff"></div>
<div class="t" style="left:493px;top:522px;font-size:12px;line-height:18px;color:#444;letter-spacing:0.2px">10006</div>
<div class="t" style="left:593px;top:522px;font-size:12px;line-height:18px;color:#444;letter-spacing:0.2px">A沐浴露小样</div>
<div class="t" style="left:693px;top:522px;font-size:12px;line-height:18px;color:#444;letter-spacing:0.2px">瓶</div>
<div class="t" style="left:879px;width:68px;top:521px;font-size:12px;line-height:18px;color:#444;text-align:right;letter-spacing:0.15px">145.00</div>
<div class="t" style="left:959px;width:97px;top:521px;font-size:12px;line-height:18px;color:#444;text-align:right;letter-spacing:0.15px">140.00</div>
<div class="t" style="left:1068px;width:102px;top:521px;font-size:12px;line-height:18px;color:#444;text-align:right;letter-spacing:0.15px">100.00</div>
<div class="t" style="left:1262px;width:110px;top:521px;font-size:12px;line-height:18px;color:#444;text-align:right;letter-spacing:0.15px">100.00</div>
<div class="t" style="left:1624px;width:68px;top:521px;font-size:12px;line-height:18px;color:#444;text-align:right;letter-spacing:0.15px">135.00</div>
<div class="t" style="left:1704px;width:68px;top:521px;font-size:12px;line-height:18px;color:#444;text-align:right;letter-spacing:0.15px">143.00</div>
<div class="t" style="left:372px;width:60px;top:554px;font-size:12px;line-height:18px;color:#444;text-align:center">12</div>
<div class="abs" style="left:449px;top:553px;width:14px;height:14px;border:1px solid #bfbfbf;border-radius:2px;background:#fff"></div>
<div class="t" style="left:493px;top:554px;font-size:12px;line-height:18px;color:#444;letter-spacing:0.2px">10007</div>
<div class="t" style="left:593px;top:554px;font-size:12px;line-height:18px;color:#444;letter-spacing:0.2px">B类洗发水2...</div>
<div class="t" style="left:693px;top:554px;font-size:12px;line-height:18px;color:#444;letter-spacing:0.2px">瓶</div>
<div class="t" style="left:879px;width:68px;top:553px;font-size:12px;line-height:18px;color:#444;text-align:right;letter-spacing:0.15px">150.00</div>
<div class="t" style="left:959px;width:97px;top:553px;font-size:12px;line-height:18px;color:#444;text-align:right;letter-spacing:0.15px">145.00</div>
<div class="t" style="left:1068px;width:102px;top:553px;font-size:12px;line-height:18px;color:#444;text-align:right;letter-spacing:0.15px">105.00</div>
<div class="t" style="left:1262px;width:110px;top:553px;font-size:12px;line-height:18px;color:#444;text-align:right;letter-spacing:0.15px">105.00</div>
<div class="t" style="left:1544px;width:68px;top:553px;font-size:12px;line-height:18px;color:#444;text-align:right;letter-spacing:0.15px">145.00</div>
<div class="t" style="left:1624px;width:68px;top:553px;font-size:12px;line-height:18px;color:#444;text-align:right;letter-spacing:0.15px">140.00</div>
<div class="t" style="left:1704px;width:68px;top:553px;font-size:12px;line-height:18px;color:#444;text-align:right;letter-spacing:0.15px">148.00</div>
<div class="t" style="left:372px;width:60px;top:586px;font-size:12px;line-height:18px;color:#444;text-align:center">13</div>
<div class="abs" style="left:449px;top:585px;width:14px;height:14px;border:1px solid #bfbfbf;border-radius:2px;background:#fff"></div>
<div class="t" style="left:493px;top:586px;font-size:12px;line-height:18px;color:#444;letter-spacing:0.2px">10008</div>
<div class="t" style="left:593px;top:586px;font-size:12px;line-height:18px;color:#444;letter-spacing:0.2px">B类洗发水5...</div>
<div class="t" style="left:693px;top:586px;font-size:12px;line-height:18px;color:#444;letter-spacing:0.2px">瓶</div>
<div class="t" style="left:879px;width:68px;top:585px;font-size:12px;line-height:18px;color:#444;text-align:right;letter-spacing:0.15px">155.00</div>
<div class="t" style="left:959px;width:97px;top:585px;font-size:12px;line-height:18px;color:#444;text-align:right;letter-spacing:0.15px">150.00</div>
<div class="t" style="left:1068px;width:102px;top:585px;font-size:12px;line-height:18px;color:#444;text-align:right;letter-spacing:0.15px">110.00</div>
<div class="t" style="left:1262px;width:110px;top:585px;font-size:12px;line-height:18px;color:#444;text-align:right;letter-spacing:0.15px">110.00</div>
<div class="t" style="left:1544px;width:68px;top:585px;font-size:12px;line-height:18px;color:#444;text-align:right;letter-spacing:0.15px">150.00</div>
<div class="t" style="left:1624px;width:68px;top:585px;font-size:12px;line-height:18px;color:#444;text-align:right;letter-spacing:0.15px">145.00</div>
<div class="t" style="left:1704px;width:68px;top:585px;font-size:12px;line-height:18px;color:#444;text-align:right;letter-spacing:0.15px">153.00</div>
<div class="t" style="left:372px;width:60px;top:618px;font-size:12px;line-height:18px;color:#444;text-align:center">14</div>
<div class="abs" style="left:449px;top:617px;width:14px;height:14px;border:1px solid #bfbfbf;border-radius:2px;background:#fff"></div>
<div class="t" style="left:493px;top:618px;font-size:12px;line-height:18px;color:#444;letter-spacing:0.2px">10009</div>
<div class="t" style="left:593px;top:618px;font-size:12px;line-height:18px;color:#444;letter-spacing:0.2px">B洗发水小样</div>
<div class="t" style="left:693px;top:618px;font-size:12px;line-height:18px;color:#444;letter-spacing:0.2px">瓶</div>
<div class="t" style="left:879px;width:68px;top:617px;font-size:12px;line-height:18px;color:#444;text-align:right;letter-spacing:0.15px">160.00</div>
<div class="t" style="left:959px;width:97px;top:617px;font-size:12px;line-height:18px;color:#444;text-align:right;letter-spacing:0.15px">155.00</div>
<div class="t" style="left:1068px;width:102px;top:617px;font-size:12px;line-height:18px;color:#444;text-align:right;letter-spacing:0.15px">115.00</div>
<div class="t" style="left:1262px;width:110px;top:617px;font-size:12px;line-height:18px;color:#444;text-align:right;letter-spacing:0.15px">115.00</div>
<div class="t" style="left:1544px;width:68px;top:617px;font-size:12px;line-height:18px;color:#444;text-align:right;letter-spacing:0.15px">155.00</div>
<div class="t" style="left:1624px;width:68px;top:617px;font-size:12px;line-height:18px;color:#444;text-align:right;letter-spacing:0.15px">150.00</div>
<div class="t" style="left:1704px;width:68px;top:617px;font-size:12px;line-height:18px;color:#444;text-align:right;letter-spacing:0.15px">158.00</div>
<div class="t" style="left:372px;width:60px;top:650px;font-size:12px;line-height:18px;color:#444;text-align:center">15</div>
<div class="abs" style="left:449px;top:649px;width:14px;height:14px;border:1px solid #bfbfbf;border-radius:2px;background:#fff"></div>
<div class="t" style="left:493px;top:650px;font-size:12px;line-height:18px;color:#444;letter-spacing:0.2px">10010</div>
<div class="t" style="left:593px;top:650px;font-size:12px;line-height:18px;color:#444;letter-spacing:0.2px">B类沐浴露2...</div>
<div class="t" style="left:693px;top:650px;font-size:12px;line-height:18px;color:#444;letter-spacing:0.2px">瓶</div>
<div class="t" style="left:879px;width:68px;top:649px;font-size:12px;line-height:18px;color:#444;text-align:right;letter-spacing:0.15px">165.00</div>
<div class="t" style="left:959px;width:97px;top:649px;font-size:12px;line-height:18px;color:#444;text-align:right;letter-spacing:0.15px">160.00</div>
<div class="t" style="left:1068px;width:102px;top:649px;font-size:12px;line-height:18px;color:#444;text-align:right;letter-spacing:0.15px">120.00</div>
<div class="t" style="left:1624px;width:68px;top:649px;font-size:12px;line-height:18px;color:#444;text-align:right;letter-spacing:0.15px">155.00</div>
<div class="t" style="left:1704px;width:68px;top:649px;font-size:12px;line-height:18px;color:#444;text-align:right;letter-spacing:0.15px">163.00</div>
<div class="t" style="left:372px;width:60px;top:682px;font-size:12px;line-height:18px;color:#444;text-align:center">16</div>
<div class="abs" style="left:449px;top:681px;width:14px;height:14px;border:1px solid #bfbfbf;border-radius:2px;background:#fff"></div>
<div class="t" style="left:493px;top:682px;font-size:12px;line-height:18px;color:#444;letter-spacing:0.2px">10011</div>
<div class="t" style="left:593px;top:682px;font-size:12px;line-height:18px;color:#444;letter-spacing:0.2px">B类沐浴露5...</div>
<div class="t" style="left:693px;top:682px;font-size:12px;line-height:18px;color:#444;letter-spacing:0.2px">瓶</div>
<div class="t" style="left:879px;width:68px;top:681px;font-size:12px;line-height:18px;color:#444;text-align:right;letter-spacing:0.15px">170.00</div>
<div class="t" style="left:959px;width:97px;top:681px;font-size:12px;line-height:18px;color:#444;text-align:right;letter-spacing:0.15px">165.00</div>
<div class="t" style="left:1068px;width:102px;top:681px;font-size:12px;line-height:18px;color:#444;text-align:right;letter-spacing:0.15px">125.00</div>
<div class="t" style="left:1624px;width:68px;top:681px;font-size:12px;line-height:18px;color:#444;text-align:right;letter-spacing:0.15px">160.00</div>
<div class="t" style="left:1704px;width:68px;top:681px;font-size:12px;line-height:18px;color:#444;text-align:right;letter-spacing:0.15px">168.00</div>
<div class="t" style="left:372px;width:60px;top:714px;font-size:12px;line-height:18px;color:#444;text-align:center">17</div>
<div class="abs" style="left:449px;top:713px;width:14px;height:14px;border:1px solid #bfbfbf;border-radius:2px;background:#fff"></div>
<div class="t" style="left:493px;top:714px;font-size:12px;line-height:18px;color:#444;letter-spacing:0.2px">10012</div>
<div class="t" style="left:593px;top:714px;font-size:12px;line-height:18px;color:#444;letter-spacing:0.2px">B沐浴露小样</div>
<div class="t" style="left:693px;top:714px;font-size:12px;line-height:18px;color:#444;letter-spacing:0.2px">瓶</div>
<div class="t" style="left:879px;width:68px;top:713px;font-size:12px;line-height:18px;color:#444;text-align:right;letter-spacing:0.15px">175.00</div>
<div class="t" style="left:959px;width:97px;top:713px;font-size:12px;line-height:18px;color:#444;text-align:right;letter-spacing:0.15px">170.00</div>
<div class="t" style="left:1068px;width:102px;top:713px;font-size:12px;line-height:18px;color:#444;text-align:right;letter-spacing:0.15px">130.00</div>
<div class="t" style="left:1624px;width:68px;top:713px;font-size:12px;line-height:18px;color:#444;text-align:right;letter-spacing:0.15px">165.00</div>
<div class="t" style="left:1704px;width:68px;top:713px;font-size:12px;line-height:18px;color:#444;text-align:right;letter-spacing:0.15px">173.00</div>
<div class="t" style="left:372px;width:60px;top:746px;font-size:12px;line-height:18px;color:#444;text-align:center">18</div>
<div class="abs" style="left:449px;top:745px;width:14px;height:14px;border:1px solid #bfbfbf;border-radius:2px;background:#fff"></div>
<div class="t" style="left:493px;top:746px;font-size:12px;line-height:18px;color:#444;letter-spacing:0.2px">10013</div>
<div class="t" style="left:593px;top:746px;font-size:12px;line-height:18px;color:#444;letter-spacing:0.2px">生姜洗发水</div>
<div class="t" style="left:693px;top:746px;font-size:12px;line-height:18px;color:#444;letter-spacing:0.2px">瓶</div>
<div class="t" style="left:879px;width:68px;top:745px;font-size:12px;line-height:18px;color:#444;text-align:right;letter-spacing:0.15px">180.00</div>
<div class="t" style="left:959px;width:97px;top:745px;font-size:12px;line-height:18px;color:#444;text-align:right;letter-spacing:0.15px">175.00</div>
<div class="t" style="left:1068px;width:102px;top:745px;font-size:12px;line-height:18px;color:#444;text-align:right;letter-spacing:0.15px">135.00</div>
<div class="t" style="left:1262px;width:110px;top:745px;font-size:12px;line-height:18px;color:#444;text-align:right;letter-spacing:0.15px">135.00</div>
<div class="t" style="left:1544px;width:68px;top:745px;font-size:12px;line-height:18px;color:#444;text-align:right;letter-spacing:0.15px">175.00</div>
<div class="t" style="left:1624px;width:68px;top:745px;font-size:12px;line-height:18px;color:#444;text-align:right;letter-spacing:0.15px">170.00</div>
<div class="t" style="left:1704px;width:68px;top:745px;font-size:12px;line-height:18px;color:#444;text-align:right;letter-spacing:0.15px">178.00</div>
<div class="t" style="left:372px;width:60px;top:778px;font-size:12px;line-height:18px;color:#444;text-align:center">19</div>
<div class="abs" style="left:449px;top:777px;width:14px;height:14px;border:1px solid #bfbfbf;border-radius:2px;background:#fff"></div>
<div class="t" style="left:493px;top:778px;font-size:12px;line-height:18px;color:#444;letter-spacing:0.2px">10014</div>
<div class="t" style="left:593px;top:778px;font-size:12px;line-height:18px;color:#444;letter-spacing:0.2px">控油洗发水</div>
<div class="t" style="left:693px;top:778px;font-size:12px;line-height:18px;color:#444;letter-spacing:0.2px">瓶</div>
<div class="t" style="left:879px;width:68px;top:777px;font-size:12px;line-height:18px;color:#444;text-align:right;letter-spacing:0.15px">185.00</div>
<div class="t" style="left:959px;width:97px;top:777px;font-size:12px;line-height:18px;color:#444;text-align:right;letter-spacing:0.15px">180.00</div>
<div class="t" style="left:1068px;width:102px;top:777px;font-size:12px;line-height:18px;color:#444;text-align:right;letter-spacing:0.15px">140.00</div>
<div class="t" style="left:1262px;width:110px;top:777px;font-size:12px;line-height:18px;color:#444;text-align:right;letter-spacing:0.15px">140.00</div>
<div class="t" style="left:1544px;width:68px;top:777px;font-size:12px;line-height:18px;color:#444;text-align:right;letter-spacing:0.15px">180.00</div>
<div class="t" style="left:1624px;width:68px;top:777px;font-size:12px;line-height:18px;color:#444;text-align:right;letter-spacing:0.15px">175.00</div>
<div class="t" style="left:1704px;width:68px;top:777px;font-size:12px;line-height:18px;color:#444;text-align:right;letter-spacing:0.15px">183.00</div>
<div class="t" style="left:372px;width:60px;top:810px;font-size:12px;line-height:18px;color:#444;text-align:center">20</div>
<div class="abs" style="left:449px;top:809px;width:14px;height:14px;border:1px solid #bfbfbf;border-radius:2px;background:#fff"></div>
<div class="t" style="left:493px;top:810px;font-size:12px;line-height:18px;color:#444;letter-spacing:0.2px">10015</div>
<div class="t" style="left:593px;top:810px;font-size:12px;line-height:18px;color:#444;letter-spacing:0.2px">清爽沐浴露</div>
<div class="t" style="left:693px;top:810px;font-size:12px;line-height:18px;color:#444;letter-spacing:0.2px">瓶</div>
<div class="t" style="left:879px;width:68px;top:809px;font-size:12px;line-height:18px;color:#444;text-align:right;letter-spacing:0.15px">190.00</div>
<div class="t" style="left:959px;width:97px;top:809px;font-size:12px;line-height:18px;color:#444;text-align:right;letter-spacing:0.15px">185.00</div>
<div class="t" style="left:1068px;width:102px;top:809px;font-size:12px;line-height:18px;color:#444;text-align:right;letter-spacing:0.15px">145.00</div>
<div class="t" style="left:1624px;width:68px;top:809px;font-size:12px;line-height:18px;color:#444;text-align:right;letter-spacing:0.15px">180.00</div>
<div class="t" style="left:1704px;width:68px;top:809px;font-size:12px;line-height:18px;color:#444;text-align:right;letter-spacing:0.15px">188.00</div>
<div class="t" style="left:372px;width:60px;top:842px;font-size:12px;line-height:18px;color:#444;text-align:center">21</div>
<div class="abs" style="left:449px;top:841px;width:14px;height:14px;border:1px solid #bfbfbf;border-radius:2px;background:#fff"></div>
<div class="t" style="left:493px;top:842px;font-size:12px;line-height:18px;color:#444;letter-spacing:0.2px">10016</div>
<div class="t" style="left:593px;top:842px;font-size:12px;line-height:18px;color:#444;letter-spacing:0.2px">沐浴油</div>
<div class="t" style="left:693px;top:842px;font-size:12px;line-height:18px;color:#444;letter-spacing:0.2px">瓶</div>
<div class="t" style="left:879px;width:68px;top:841px;font-size:12px;line-height:18px;color:#444;text-align:right;letter-spacing:0.15px">195.00</div>
<div class="t" style="left:959px;width:97px;top:841px;font-size:12px;line-height:18px;color:#444;text-align:right;letter-spacing:0.15px">190.00</div>
<div class="t" style="left:1068px;width:102px;top:841px;font-size:12px;line-height:18px;color:#444;text-align:right;letter-spacing:0.15px">150.00</div>
<div class="t" style="left:1624px;width:68px;top:841px;font-size:12px;line-height:18px;color:#444;text-align:right;letter-spacing:0.15px">185.00</div>
<div class="t" style="left:1704px;width:68px;top:841px;font-size:12px;line-height:18px;color:#444;text-align:right;letter-spacing:0.15px">193.00</div>
<div class="t" style="left:1356px;top:897px;font-size:12px;line-height:18px;color:#333">每页显示</div>
<div class="abs" style="left:1412px;top:890px;width:59px;height:32px;border:1px solid #ddd;border-radius:2px;background:#fff"></div>
<div class="t" style="left:1421px;top:898px;font-size:13px;line-height:18px;color:#333">50</div>
<svg class="abs" style="left:1453px;top:902px" width="12" height="7" viewBox="0 0 12 7"><path d="M0.5 0.8L6 6L11.5 0.8" fill="none" stroke="#444" stroke-width="1.2"/></svg>
<svg class="abs" style="left:1500px;top:899px" width="9" height="13" viewBox="0 0 9 13"><path d="M1 0.5V12.5M8 0.5L2.5 6.5L8 12.5" fill="none" stroke="#bbb" stroke-width="1.1"/></svg>
<svg class="abs" style="left:1527px;top:899px" width="7" height="13" viewBox="0 0 7 13"><path d="M6 0.5L1 6.5L6 12.5" fill="none" stroke="#bbb" stroke-width="1.1"/></svg>
<div class="t" style="left:1550px;top:897px;font-size:12px;line-height:18px;color:#333">第</div>
<div class="abs" style="left:1570px;top:890px;width:60px;height:32px;border:1px solid #ddd;border-radius:2px;background:#fff"></div>
<div class="t" style="left:1579px;top:897px;font-size:12px;line-height:18px;color:#333">1</div>
<div class="t" style="left:1637px;top:897px;font-size:12px;line-height:18px;color:#333">页</div>
<svg class="abs" style="left:1665px;top:899px" width="7" height="13" viewBox="0 0 7 13"><path d="M1 0.5L6 6.5L1 12.5" fill="none" stroke="#bbb" stroke-width="1.1"/></svg>
<svg class="abs" style="left:1690px;top:899px" width="9" height="13" viewBox="0 0 9 13"><path d="M8 0.5V12.5M1 0.5L6.5 6.5L1 12.5" fill="none" stroke="#bbb" stroke-width="1.1"/></svg>
<div class="t" style="left:1726px;top:897px;font-size:12px;line-height:18px;color:#333">共1页, 30条记录</div>
</body></html>
